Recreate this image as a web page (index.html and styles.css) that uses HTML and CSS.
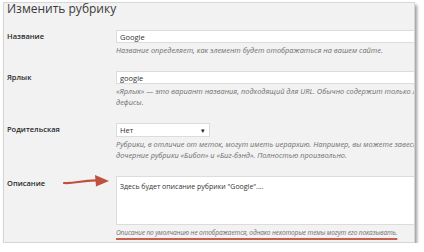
FILE: index.html
```html
<!DOCTYPE html>
<html lang="ru">
<head>
    <meta charset="UTF-8">
    <meta name="viewport" content="width=device-width, initial-scale=1.0">
    <title>Изменить рубрику</title>
    <link rel="stylesheet" href="styles.css">
</head>
<body>
    <div class="panel">
        <h2 class="title">Изменить рубрику</h2>

        <div class="form">
            <div class="row">
                <label class="label" for="name">Название</label>
                <div class="field">
                    <input class="text" id="name" type="text" value="Google">
                    <p class="desc">Название определяет, как элемент будет отображаться на вашем сайте.</p>
                </div>
            </div>

            <div class="row">
                <label class="label" for="slug">Ярлык</label>
                <div class="field">
                    <input class="text" id="slug" type="text" value="google">
                    <p class="desc">«Ярлык» — это вариант названия, подходящий для URL. Обычно содержит только латинские буквы в нижнем регистре, цифры и<br>дефисы.</p>
                </div>
            </div>

            <div class="row">
                <label class="label">Родительская</label>
                <div class="field">
                    <div class="select">
                        <span>Нет</span>
                        <span class="caret">▾</span>
                    </div>
                    <p class="desc">Рубрики, в отличие от меток, могут иметь иерархию. Например, вы можете завести рубрику «Джаз», а в ней —<br>дочерние рубрики «Бибоп» и «Биг-бэнд». Полностью произвольно.</p>
                </div>
            </div>

            <div class="row row-desc">
                <label class="label" for="description">Описание</label>
                <svg class="arrow" width="50" height="16" viewBox="0 0 50 16">
                    <path d="M2 11 C12 12 20 8 36 8.5" fill="none" stroke="#c0503e" stroke-width="2.2" stroke-linecap="round"/>
                    <path d="M33 3 L47 9 L34 14.5 Z" fill="#c0503e"/>
                </svg>
                <div class="field">
                    <textarea class="area" id="description">Здесь будет описание рубрики "Google"....</textarea>
                    <p class="desc"><span class="marked">Описание по умолчанию не отображается, однако некоторые темы могут его показывать.</span></p>
                </div>
            </div>
        </div>
    </div>
</body>
</html>
```

FILE: styles.css
```css
body {
    margin: 0;
    background: #fff;
    font-family: 'Open Sans', 'Liberation Sans', sans-serif;
    color: #333;
}
.panel {
    margin: 2px 0 0 3px;
    width: 412px;
    height: 241px;
    box-sizing: border-box;
    background: #f2f2f2;
    border: 1px solid #d6d6d6;
    box-shadow: 2px 3px 3px rgba(0, 0, 0, 0.4);
}
.title {
    margin: 0 0 15px 3px;
    font-size: 12px;
    line-height: 12px;
    font-weight: 400;
    color: #3a3a3a;
}
.form {
    display: flex;
    flex-direction: column;
    gap: 15px;
}
.row {
    position: relative;
    display: grid;
    grid-template-columns: 109px 1fr;
    padding-left: 3px;
}
.label {
    font-size: 7.5px;
    line-height: 13px;
    font-weight: 600;
    color: #2a2a2a;
}
.row-desc .label {
    padding-top: 1px;
}
.field {
    min-width: 0;
    overflow: hidden;
}
.text,
.area {
    display: block;
    box-sizing: border-box;
    width: 320px;
    margin: 0;
    border: 1px solid #dcdcdc;
    background: #fff;
    font-family: inherit;
    font-size: 7.5px;
    color: #333;
    outline: none;
}
.text {
    height: 13px;
    padding: 0 3px;
}
.area {
    height: 49px;
    padding: 4px 3px;
    resize: none;
    font-size: 7px;
    line-height: 11px;
}
.select {
    box-sizing: border-box;
    width: 94px;
    height: 14px;
    padding: 0 4px 0 3px;
    display: flex;
    justify-content: space-between;
    align-items: center;
    background: #fff;
    border: 1px solid #dcdcdc;
    font-size: 7.5px;
}
.caret {
    font-size: 7px;
    color: #222;
}
.desc {
    margin: 2px 0 0;
    font-size: 7.4px;
    line-height: 11px;
    font-style: italic;
    color: #6f6f6f;
    white-space: nowrap;
}
.row-desc .desc {
    font-size: 6.6px;
    letter-spacing: -0.15px;
    padding-bottom: 3px;
}
.marked {
    text-decoration: underline;
    text-decoration-color: #c8604e;
    text-decoration-thickness: 1.5px;
    text-underline-offset: 3px;
}
.arrow {
    position: absolute;
    left: 58px;
    top: -4px;
}
```
